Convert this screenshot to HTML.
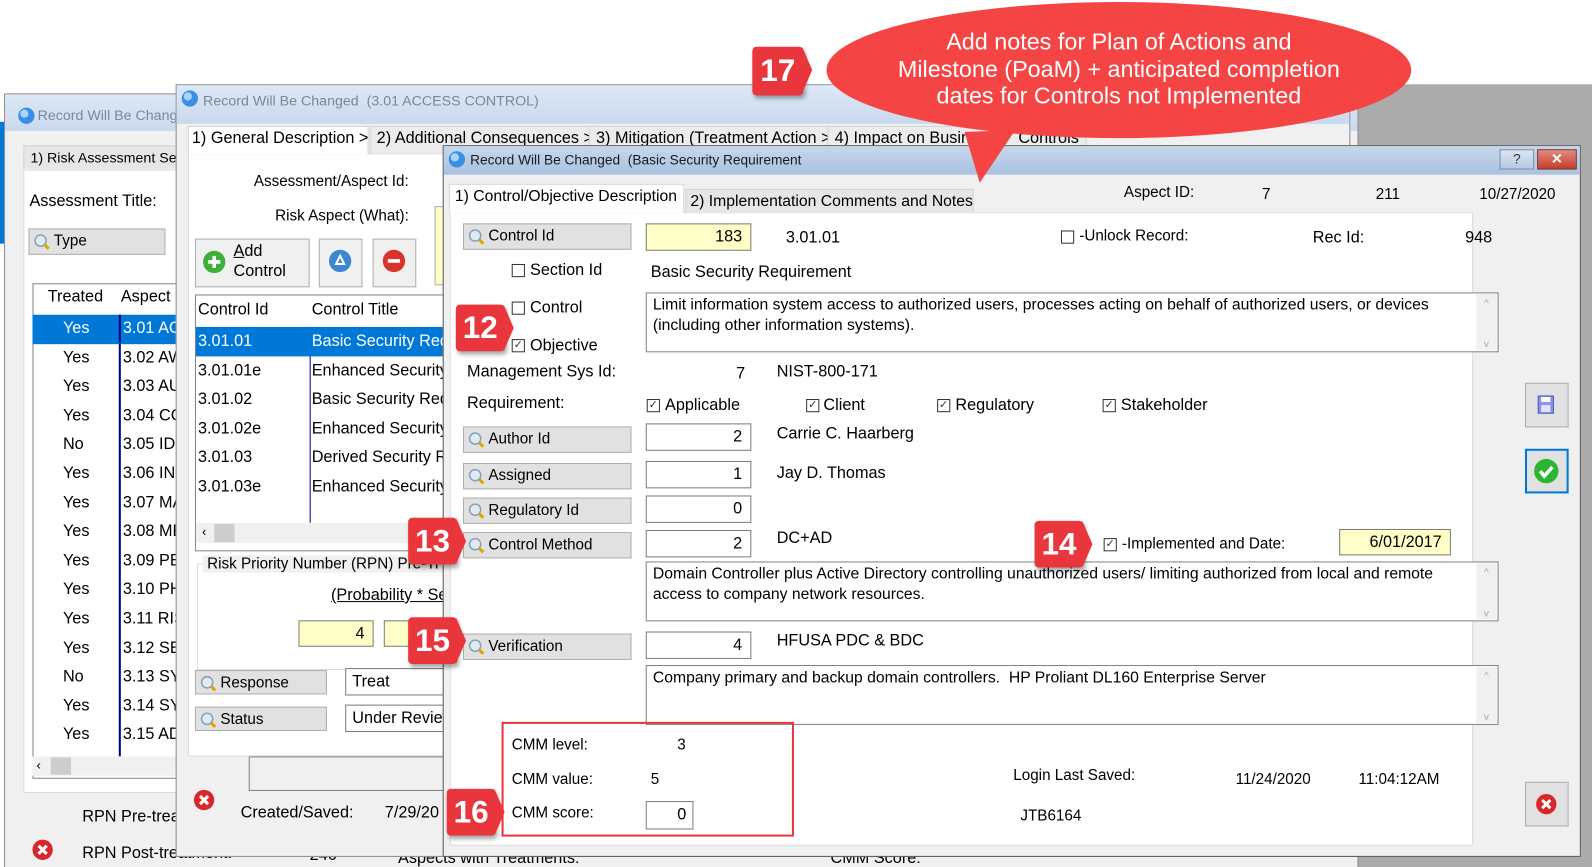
<!DOCTYPE html>
<html><head><meta charset="utf-8"><style>
*{margin:0;padding:0;box-sizing:border-box}
html,body{width:1592px;height:867px;overflow:hidden}
body{background:#fff;position:relative;font-family:"Liberation Sans",sans-serif;font-size:15px;color:#000}
#root{position:absolute;left:0;top:0;width:1568px;height:854px;overflow:hidden;transform:scale(1.0153);transform-origin:0 0}
.a{position:absolute;white-space:nowrap}
.win{position:absolute;background:#f0f0f0;border:1px solid #8a8a8a}
.tb{position:absolute;left:0;right:0;top:0;height:28px;background:linear-gradient(#dde8f5,#c9d9ee);color:#7a8798;font-size:14px;white-space:nowrap}
.wp{position:absolute;background:#fff;border:1px solid #d9d9d9}
.tab{position:absolute;background:#ececec;border:1px solid #d4d4d4;border-bottom:none;padding:3px 6px;font-size:16px;white-space:nowrap;overflow:hidden}
.btn{position:absolute;background:#e1e1e1;border:1px solid #adadad;height:26px;padding:3px 0 0 24px;font-size:15px;white-space:nowrap}
.btn svg{position:absolute;left:4px;top:4px}
.box{position:absolute;background:#fff;border:1px solid #7a7a7a;height:27px;text-align:right;padding:4px 8px 0 0;font-size:16px;white-space:nowrap;overflow:hidden}
.y{background:#ffffc8}
.ta{position:absolute;background:#fff;border:1px solid #828282;padding:2px 6px;font-size:15.5px;line-height:20px;white-space:nowrap}
.ta .sb{position:absolute;right:1px;top:1px;bottom:1px;width:20px;background:#f0f0f0;color:#aaa;font-size:10px;text-align:center}
.cb{position:absolute;width:13px;height:13px;border:1px solid #333;background:#fff;font-size:11px;line-height:11px;text-align:center;color:#333}
.badge{position:absolute;width:48px;height:46px;background:#e8363c;color:#fff;font-weight:bold;font-size:31px;text-align:center;line-height:46px;border-radius:4px;box-shadow:2px 3px 4px rgba(0,0,0,.35)}
.badge:after{content:"";position:absolute;right:-9px;top:0;border-left:10px solid #e8363c;border-top:23px solid transparent;border-bottom:23px solid transparent}
.grow{position:absolute;height:29px;line-height:29px;font-size:16px}
.sel{background:#0078d7;color:#fff}
</style></head><body><div id="root">
<svg width="0" height="0" style="position:absolute"><defs><g id="mg"><circle cx="7" cy="7" r="5.5" fill="#dfeaf3" stroke="#8aa0b5" stroke-width="1.5"/><path d="M11 11l4 4" stroke="#e2a400" stroke-width="3"/></g></defs></svg>

<div class="a" style="left:1300px;top:83px;width:300px;height:790px;background:#ababab"></div>
<div class="a" style="left:0;top:120px;width:4px;height:120px;background:#0078d7"></div>

<!-- window 1 -->
<div class="win" style="left:4px;top:92px;width:1334px;height:780px">
 <div class="tb" style="height:36px;padding:12px 0 0 32px">Record Will Be Change</div>
 <svg class="a" style="left:12px;top:12px" width="18" height="18"><circle cx="9" cy="9" r="8" fill="#3a8ee6"/><circle cx="7" cy="7" r="4" fill="#a9d6ff"/></svg>
 <div class="tab" style="left:18px;top:50px;font-size:14px;background:#e6e6e6">1) Risk Assessment Setu</div>
 <div class="wp" style="left:18px;top:74px;width:400px;height:614px"></div>
 <div class="a" style="left:24px;top:97px;font-size:16px">Assessment Title:</div>
 <div class="btn" style="left:23px;top:132px;width:135px">Type<svg width="18" height="18"><use href="#mg"/></svg></div>
 <div class="a" style="left:27px;top:186px;width:400px;height:488px;border:1px solid #828282;background:#fff"></div>
</div>
<div class="a" style="left:47px;top:284px;font-size:16px">Treated</div>
<div class="a" style="left:119px;top:284px;font-size:16px">Aspect</div>
<div class="a" style="left:117px;top:310px;width:2px;height:435px;background:#000080"></div>
<div class="grow sel" style="left:32px;top:310px;width:142px"></div>
<div class="a" style="left:117px;top:310px;width:2px;height:28px;background:#000080"></div>
<div class="a" style="left:62px;top:314px;font-size:16px;line-height:20px">
<div style="color:#fff;height:28.6px">Yes</div><div style="height:28.6px">Yes</div><div style="height:28.6px">Yes</div><div style="height:28.6px">Yes</div><div style="height:28.6px">No</div><div style="height:28.6px">Yes</div><div style="height:28.6px">Yes</div><div style="height:28.6px">Yes</div><div style="height:28.6px">Yes</div><div style="height:28.6px">Yes</div><div style="height:28.6px">Yes</div><div style="height:28.6px">Yes</div><div style="height:28.6px">No</div><div style="height:28.6px">Yes</div><div style="height:28.6px">Yes</div></div>
<div class="a" style="left:121px;top:314px;font-size:16px;line-height:20px">
<div style="color:#fff;height:28.6px">3.01 AC</div><div style="height:28.6px">3.02 AW</div><div style="height:28.6px">3.03 AU</div><div style="height:28.6px">3.04 CC</div><div style="height:28.6px">3.05 IDE</div><div style="height:28.6px">3.06 INC</div><div style="height:28.6px">3.07 MA</div><div style="height:28.6px">3.08 ME</div><div style="height:28.6px">3.09 PEI</div><div style="height:28.6px">3.10 PH</div><div style="height:28.6px">3.11 RIS</div><div style="height:28.6px">3.12 SEC</div><div style="height:28.6px">3.13 SYS</div><div style="height:28.6px">3.14 SYS</div><div style="height:28.6px">3.15 AD</div></div>
<div class="a" style="left:32px;top:745px;width:142px;height:19px;background:#f0f0f0;font-size:13px;padding:1px 4px">&lsaquo;<span style="display:inline-block;width:20px;height:17px;background:#cdcdcd;margin-left:10px;vertical-align:top"></span></div>
<div class="a" style="left:81px;top:796px;font-size:16px">RPN Pre-treat</div>
<div class="a" style="left:81px;top:832px;font-size:16px">RPN Post-treatment:</div>
<div class="a" style="left:305px;top:834px;font-size:16px">246</div>
<div class="a" style="left:392px;top:837px;font-size:16px">Aspects with Treatments:</div>
<div class="a" style="left:818px;top:837px;font-size:16px">CMM Score:</div>
<svg class="a" style="left:31px;top:826px" width="22" height="22"><circle cx="11" cy="11" r="10" fill="#d9262b"/><path d="M7 7l8 8M15 7l-8 8" stroke="#fff" stroke-width="3"/></svg>

<!-- window 2 -->
<div class="win" style="left:173px;top:83px;width:1157px;height:761px">
 <div class="tb" style="height:38px;padding:7px 0 0 26px">Record Will Be Changed &nbsp;(3.01 ACCESS CONTROL)</div>
 <svg class="a" style="left:4px;top:4px" width="18" height="18"><circle cx="9" cy="9" r="8" fill="#3a8ee6"/><circle cx="7" cy="7" r="4" fill="#a9d6ff"/></svg>
 <div class="wp" style="left:11px;top:67px;width:1140px;height:594px"></div>
 <div class="tab" style="left:11px;top:40px;width:178px;height:28px;background:#fff;padding-left:3px">1) General Description &gt;</div>
 <div class="tab" style="left:190px;top:40px;height:27px">2) Additional Consequences &gt;</div>
 <div class="tab" style="left:406px;top:40px;height:27px">3) Mitigation (Treatment Action &gt;</div>
 <div class="tab" style="left:641px;top:40px;height:27px">4) Impact on Business &gt; &nbsp;Controls</div>
</div>
<div class="a" style="left:250px;top:170px;font-size:15px">Assessment/Aspect Id:</div>
<div class="a" style="left:271px;top:204px;font-size:15px">Risk Aspect (What):</div>
<div class="a" style="left:428px;top:203px;width:10px;height:78px;background:#ffffc8;border:1px solid #aaa"></div>
<div class="a" style="left:192px;top:235px;width:113px;height:48px;background:#f0f0f0;border:1px solid #adadad"></div>
<svg class="a" style="left:199px;top:246px" width="24" height="24"><circle cx="12" cy="12" r="11" fill="#3fae3a"/><path d="M12 6v12M6 12h12" stroke="#fff" stroke-width="3.5"/></svg>
<div class="a" style="left:230px;top:238px;font-size:16px;line-height:20px"><u>A</u>dd<br>Control</div>
<div class="a" style="left:314px;top:235px;width:43px;height:48px;background:#f0f0f0;border:1px solid #adadad"></div>
<svg class="a" style="left:323px;top:245px" width="24" height="24"><circle cx="12" cy="12" r="11" fill="#3d86d0"/><path d="M12 7l-4 8h8z" fill="none" stroke="#fff" stroke-width="2"/></svg>
<div class="a" style="left:367px;top:235px;width:43px;height:48px;background:#f0f0f0;border:1px solid #adadad"></div>
<svg class="a" style="left:376px;top:245px" width="24" height="24"><circle cx="12" cy="12" r="11" fill="#d9342b"/><path d="M6 12h12" stroke="#fff" stroke-width="3.5"/></svg>
<div class="a" style="left:192px;top:290px;width:260px;height:253px;border:1px solid #828282;background:#fff"></div>
<div class="a" style="left:195px;top:297px;font-size:16px">Control Id</div>
<div class="a" style="left:307px;top:297px;font-size:16px">Control Title</div>
<div class="a" style="left:305px;top:322px;width:1px;height:193px;background:#000080"></div>
<div class="grow sel" style="left:193px;top:322px;width:250px"></div>
<div class="a" style="left:195px;top:327px;font-size:16px;line-height:20px">
<div style="color:#fff;height:28.6px">3.01.01</div><div style="height:28.6px">3.01.01e</div><div style="height:28.6px">3.01.02</div><div style="height:28.6px">3.01.02e</div><div style="height:28.6px">3.01.03</div><div style="height:28.6px">3.01.03e</div></div>
<div class="a" style="left:307px;top:327px;font-size:16px;line-height:20px">
<div style="color:#fff;height:28.6px">Basic Security Req</div><div style="height:28.6px">Enhanced Security</div><div style="height:28.6px">Basic Security Req</div><div style="height:28.6px">Enhanced Security</div><div style="height:28.6px">Derived Security R</div><div style="height:28.6px">Enhanced Security</div></div>
<div class="a" style="left:193px;top:515px;width:250px;height:20px;background:#f0f0f0;font-size:13px;padding:1px 6px">&lsaquo;<span style="display:inline-block;width:20px;height:18px;background:#cdcdcd;margin-left:8px;vertical-align:top"></span></div>
<div class="a" style="left:194px;top:555px;width:260px;height:105px;border:1px solid #dcdcdc"></div>
<div class="a" style="left:200px;top:547px;background:#f0f0f0;font-size:15px;padding:0 4px">Risk Priority Number (RPN) Pre-Tr</div>
<div class="a" style="left:326px;top:578px;font-size:16px;text-decoration:underline">(Probability * Se</div>
<div class="box y" style="left:294px;top:611px;width:74px;height:26px">4</div>
<div class="box y" style="left:378px;top:611px;width:60px;height:26px"></div>
<div class="btn" style="left:192px;top:660px;width:130px;height:24px">Response<svg width="18" height="18"><use href="#mg"/></svg></div>
<div class="btn" style="left:192px;top:696px;width:130px;height:24px">Status<svg width="18" height="18"><use href="#mg"/></svg></div>
<div class="box" style="left:340px;top:658px;width:110px;text-align:left;padding-left:6px">Treat</div>
<div class="box" style="left:340px;top:694px;width:110px;text-align:left;padding-left:6px">Under Review</div>
<div class="a" style="left:245px;top:745px;width:200px;height:34px;border:1px solid #828282"></div>
<svg class="a" style="left:190px;top:777px" width="22" height="22"><circle cx="11" cy="11" r="10" fill="#d9262b"/><path d="M7 7l8 8M15 7l-8 8" stroke="#fff" stroke-width="3"/></svg>
<div class="a" style="left:237px;top:792px;font-size:16px">Created/Saved:</div>
<div class="a" style="left:379px;top:792px;font-size:16px">7/29/20</div>

<!-- main dialog -->
<div class="win" style="left:436px;top:143px;width:1121px;height:701px;border-color:#555;z-index:2">
 <div class="tb" style="height:28px;padding:6px 0 0 26px;color:#1a1a1a;font-size:13.5px;background:linear-gradient(#c6d7ec,#a9c2e0)">Record Will Be Changed &nbsp;(Basic Security Requirement</div>
 <svg class="a" style="left:4px;top:4px" width="18" height="18"><circle cx="9" cy="9" r="8" fill="#3a8ee6"/><circle cx="7" cy="7" r="4" fill="#a9d6ff"/></svg>
 <div class="a" style="left:1040px;top:3px;width:34px;height:20px;background:linear-gradient(#dce6f2,#b7c8dd);border:1px solid #7f8fa5;text-align:center;color:#334;font-size:14px">?</div>
 <div class="a" style="left:1077px;top:3px;width:39px;height:20px;background:linear-gradient(#e58a7c,#c33e2c);border:1px solid #7a2a22;text-align:center;color:#fff;font-weight:bold;font-size:14px">✕</div>
 <div class="wp" style="left:6px;top:65px;width:1008px;height:624px;border-color:#dadada"></div>
 <div class="tab" style="left:5px;top:37px;width:232px;height:29px;background:#fff;font-size:15.5px;padding-left:5px">1) Control/Objective Description</div>
 <div class="tab" style="left:238px;top:42px;width:284px;height:24px;background:#e6e6e6;font-size:15.5px;padding:3px 0 0 4px">2) Implementation Comments and Notes</div>
</div>
<div style="position:absolute;left:0;top:0;z-index:3">
<div class="a" style="left:1107px;top:181px">Aspect ID:</div>
<div class="a" style="left:1243px;top:183px">7</div>
<div class="a" style="left:1355px;top:183px">211</div>
<div class="a" style="left:1457px;top:183px">10/27/2020</div>
<div class="btn" style="left:456px;top:220px;width:166px">Control Id<svg width="18" height="18"><use href="#mg"/></svg></div>
<div class="box y" style="left:636px;top:220px;width:104px">183</div>
<div class="a" style="left:774px;top:226px;font-size:16px">3.01.01</div>
<div class="cb" style="left:1045px;top:227px"></div>
<div class="a" style="left:1063px;top:224px">-Unlock Record:</div>
<div class="a" style="left:1293px;top:226px;font-size:16px">Rec Id:</div>
<div class="a" style="left:1443px;top:226px;font-size:16px">948</div>
<div class="cb" style="left:504px;top:260px"></div><div class="a" style="left:522px;top:258px;font-size:16px">Section Id</div>
<div class="a" style="left:641px;top:260px;font-size:16px">Basic Security Requirement</div>
<div class="ta" style="left:636px;top:288px;width:840px;height:59px">Limit information system access to authorized users, processes acting on behalf of authorized users, or devices<br>(including other information systems).<div class="sb">^<br><br>v</div></div>
<div class="cb" style="left:504px;top:297px"></div><div class="a" style="left:522px;top:295px;font-size:16px">Control</div>
<div class="cb" style="left:504px;top:334px">✓</div><div class="a" style="left:522px;top:332px;font-size:16px">Objective</div>
<div class="a" style="left:460px;top:358px;font-size:16px">Management Sys Id:</div>
<div class="a" style="left:725px;top:360px;font-size:16px">7</div>
<div class="a" style="left:765px;top:358px;font-size:16px">NIST-800-171</div>
<div class="a" style="left:460px;top:389px;font-size:16px">Requirement:</div>
<div class="cb" style="left:637px;top:393px">✓</div><div class="a" style="left:655px;top:391px;font-size:16px">Applicable</div>
<div class="cb" style="left:794px;top:393px">✓</div><div class="a" style="left:811px;top:391px;font-size:16px">Client</div>
<div class="cb" style="left:923px;top:393px">✓</div><div class="a" style="left:941px;top:391px;font-size:16px">Regulatory</div>
<div class="cb" style="left:1086px;top:393px">✓</div><div class="a" style="left:1104px;top:391px;font-size:16px">Stakeholder</div>
<div class="btn" style="left:456px;top:420px;width:166px">Author Id<svg width="18" height="18"><use href="#mg"/></svg></div>
<div class="box" style="left:636px;top:417px;width:104px">2</div>
<div class="a" style="left:765px;top:419px;font-size:16px">Carrie C. Haarberg</div>
<div class="btn" style="left:456px;top:456px;width:166px">Assigned<svg width="18" height="18"><use href="#mg"/></svg></div>
<div class="box" style="left:636px;top:454px;width:104px">1</div>
<div class="a" style="left:765px;top:458px;font-size:16px">Jay D. Thomas</div>
<div class="btn" style="left:456px;top:490px;width:166px">Regulatory Id<svg width="18" height="18"><use href="#mg"/></svg></div>
<div class="box" style="left:636px;top:488px;width:104px">0</div>
<div class="btn" style="left:456px;top:524px;width:166px">Control Method<svg width="18" height="18"><use href="#mg"/></svg></div>
<div class="box" style="left:636px;top:522px;width:104px">2</div>
<div class="a" style="left:765px;top:522px;font-size:16px">DC+AD</div>
<div class="cb" style="left:1087px;top:530px">✓</div><div class="a" style="left:1105px;top:527px">-Implemented and Date:</div>
<div class="box y" style="left:1319px;top:521px;width:110px;height:26px">6/01/2017</div>
<div class="ta" style="left:636px;top:553px;width:840px;height:59px">Domain Controller plus Active Directory controlling unauthorized users/ limiting authorized from local and remote<br>access to company network resources.<div class="sb">^<br><br>v</div></div>
<div class="btn" style="left:456px;top:624px;width:166px">Verification<svg width="18" height="18"><use href="#mg"/></svg></div>
<div class="box" style="left:636px;top:622px;width:104px">4</div>
<div class="a" style="left:765px;top:623px;font-size:16px">HFUSA PDC &amp; BDC</div>
<div class="ta" style="left:636px;top:655px;width:840px;height:59px">Company primary and backup domain controllers.&nbsp; HP Proliant DL160 Enterprise Server<div class="sb">^<br><br>v</div></div>
<div class="a" style="left:494px;top:711px;width:288px;height:113px;border:2px solid #e8363c"></div>
<div class="a" style="left:504px;top:725px">CMM level:</div><div class="a" style="left:667px;top:725px">3</div>
<div class="a" style="left:504px;top:759px">CMM value:</div><div class="a" style="left:641px;top:759px">5</div>
<div class="a" style="left:504px;top:792px">CMM score:</div>
<div class="box" style="left:636px;top:789px;width:47px;height:28px;padding-right:6px">0</div>
<div class="a" style="left:998px;top:755px">Login Last Saved:</div>
<div class="a" style="left:1217px;top:759px">11/24/2020</div>
<div class="a" style="left:1338px;top:759px">11:04:12AM</div>
<div class="a" style="left:1005px;top:795px">JTB6164</div>
<div class="a" style="left:1502px;top:377px;width:43px;height:44px;background:#e1e1e1;border:1px solid #adadad"></div>
<svg class="a" style="left:1514px;top:389px" width="18" height="20"><rect x="1" y="1" width="15" height="17" fill="#8a93e8" stroke="#4c57c2"/><rect x="4" y="2" width="9" height="5" fill="#fff"/><rect x="4" y="10" width="9" height="7" fill="#dfe3ff"/></svg>
<div class="a" style="left:1502px;top:442px;width:43px;height:44px;background:#e1e1e1;border:2px solid #0078d7"></div>
<svg class="a" style="left:1510px;top:451px" width="26" height="26"><circle cx="13" cy="13" r="12" fill="#2bb532"/><path d="M7 13l4 5 8-9" fill="none" stroke="#fff" stroke-width="3.5"/></svg>
<div class="a" style="left:1502px;top:770px;width:43px;height:44px;background:#e1e1e1;border:1px solid #adadad"></div>
<svg class="a" style="left:1512px;top:781px" width="22" height="22"><circle cx="11" cy="11" r="10" fill="#d9262b"/><path d="M7 7l8 8M15 7l-8 8" stroke="#fff" stroke-width="3"/></svg>

<div class="badge" style="left:449px;top:300px">12</div>
<div class="badge" style="left:402px;top:510px">13</div>
<div class="badge" style="left:1019px;top:513px">14</div>
<div class="badge" style="left:402px;top:608px">15</div>
<div class="badge" style="left:440px;top:777px">16</div>
<div class="badge" style="left:741px;top:46px;width:50px;height:48px;line-height:48px">17</div>

<svg class="a" style="left:800px;top:0" width="600" height="190"><path d="M150 130 L165 180 L200 128 Z" fill="#f44444"/><ellipse cx="302" cy="69" rx="288" ry="67" fill="#f44444"/></svg>
<div class="a" style="left:814px;top:28px;width:576px;text-align:center;color:#fff;font-size:23px;line-height:26.5px">Add notes for Plan of Actions and<br>Milestone (PoaM) + anticipated completion<br>dates for Controls not Implemented</div>
</div>
</div></body></html>
